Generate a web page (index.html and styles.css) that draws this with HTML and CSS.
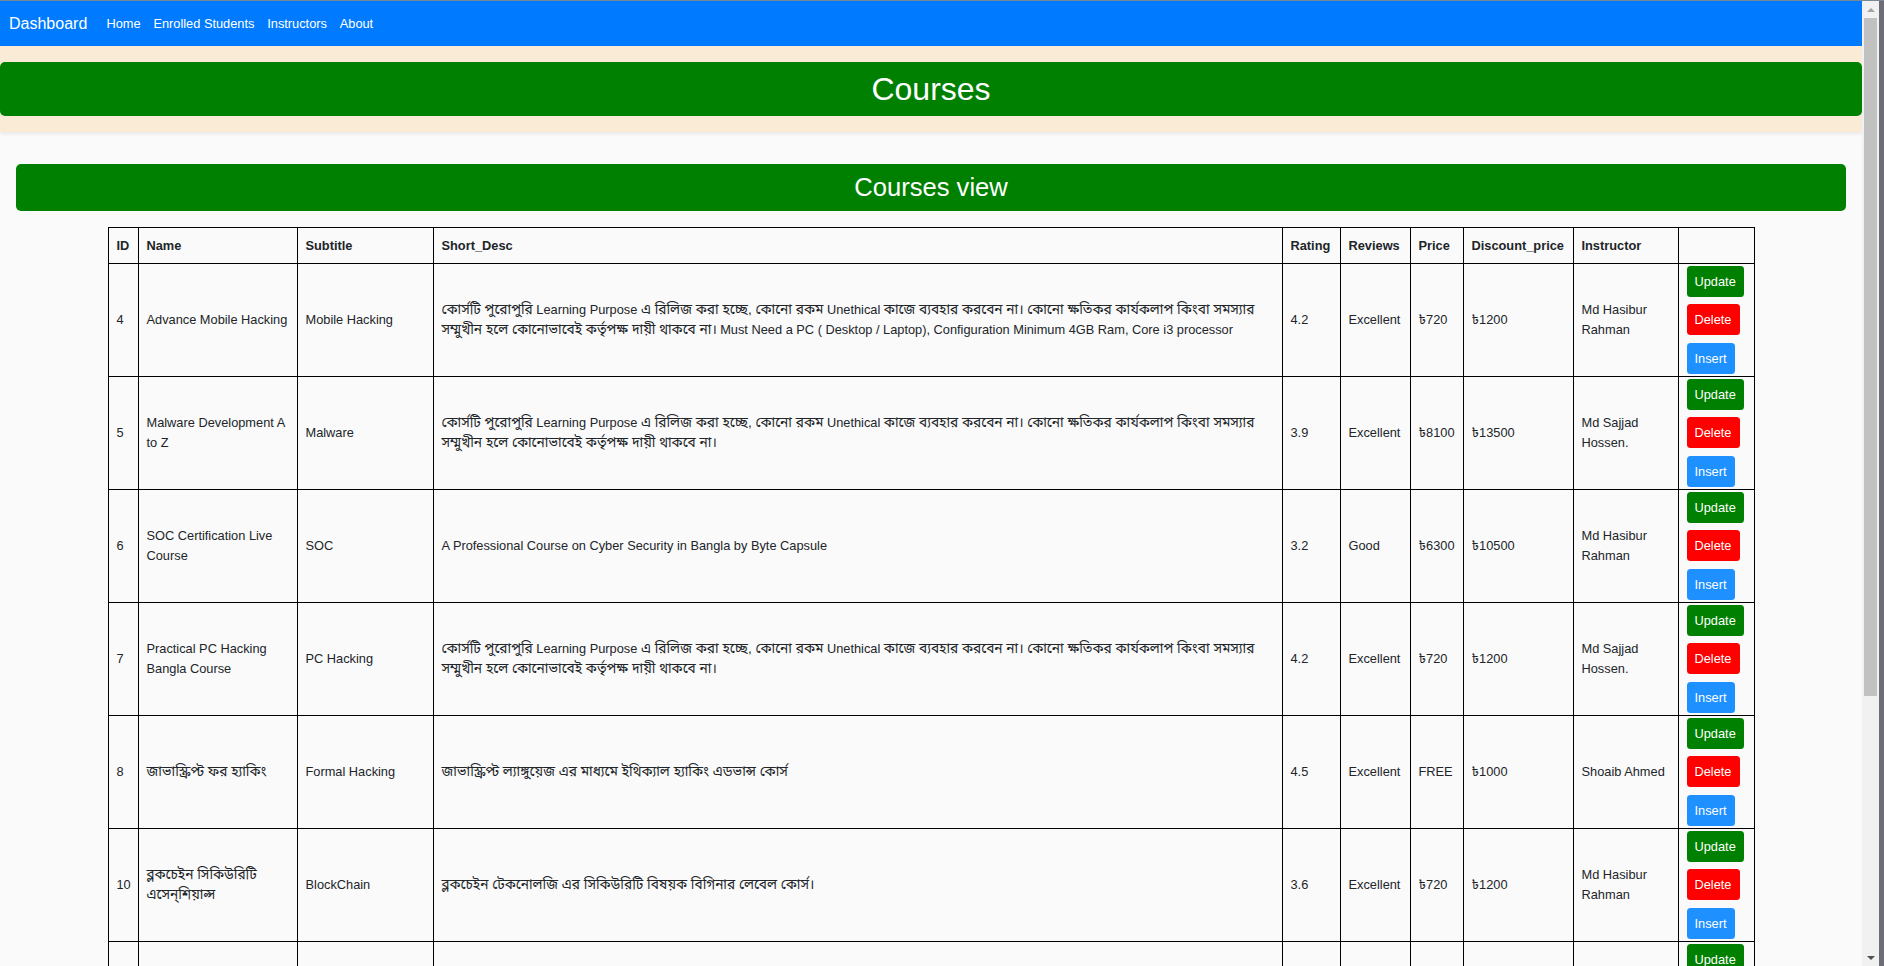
FILE: index.html
```html
<!DOCTYPE html>
<html lang="en">
<head>
<meta charset="utf-8">
<title>Dashboard - Courses</title>
<link rel="stylesheet" href="styles.css">
</head>
<body>
<div class="window">
  <div class="viewport">
    <nav class="navbar">
      <a class="brand" href="#">Dashboard</a>
      <a class="nav-link" href="#">Home</a>
      <a class="nav-link" href="#">Enrolled Students</a>
      <a class="nav-link" href="#">Instructors</a>
      <a class="nav-link" href="#">About</a>
    </nav>
    <header class="hero">
      <h1 class="hero-title">Courses</h1>
    </header>
    <main class="content">
      <h2 class="section-title">Courses view</h2>
      <table class="courses">
        <colgroup>
          <col class="c-id"><col class="c-name"><col class="c-sub"><col class="c-desc"><col class="c-rating"><col class="c-rev"><col class="c-price"><col class="c-disc"><col class="c-inst"><col class="c-act">
        </colgroup>
        <thead>
          <tr>
            <th>ID</th><th>Name</th><th>Subtitle</th><th>Short_Desc</th><th>Rating</th><th>Reviews</th><th>Price</th><th>Discount_price</th><th>Instructor</th><th></th>
          </tr>
        </thead>
        <tbody>
          <tr>
            <td>4</td>
            <td>Advance Mobile Hacking</td>
            <td>Mobile Hacking</td>
            <td><span class="bn" lang="bn">কোর্সটি পুরোপুরি</span> Learning Purpose <span class="bn" lang="bn">এ রিলিজ করা হচ্ছে, কোনো রকম</span> Unethical <span class="bn" lang="bn">কাজে ব্যবহার করবেন না। কোনো ক্ষতিকর কার্যকলাপ কিংবা সমস্যার সম্মুখীন হলে কোনোভাবেই কর্তৃপক্ষ দায়ী থাকবে না।</span> Must Need a PC ( Desktop / Laptop), Configuration Minimum 4GB Ram, Core i3 processor</td>
            <td>4.2</td><td>Excellent</td><td>৳720</td><td>৳1200</td><td>Md Hasibur Rahman</td>
            <td class="actions"><button class="btn btn-update">Update</button><button class="btn btn-delete">Delete</button><button class="btn btn-insert">Insert</button></td>
          </tr>
          <tr>
            <td>5</td>
            <td>Malware Development A to Z</td>
            <td>Malware</td>
            <td><span class="bn" lang="bn">কোর্সটি পুরোপুরি</span> Learning Purpose <span class="bn" lang="bn">এ রিলিজ করা হচ্ছে, কোনো রকম</span> Unethical <span class="bn" lang="bn">কাজে ব্যবহার করবেন না। কোনো ক্ষতিকর কার্যকলাপ কিংবা সমস্যার সম্মুখীন হলে কোনোভাবেই কর্তৃপক্ষ দায়ী থাকবে না।</span></td>
            <td>3.9</td><td>Excellent</td><td>৳8100</td><td>৳13500</td><td>Md Sajjad Hossen.</td>
            <td class="actions"><button class="btn btn-update">Update</button><button class="btn btn-delete">Delete</button><button class="btn btn-insert">Insert</button></td>
          </tr>
          <tr>
            <td>6</td>
            <td>SOC Certification Live Course</td>
            <td>SOC</td>
            <td>A Professional Course on Cyber Security in Bangla by Byte Capsule</td>
            <td>3.2</td><td>Good</td><td>৳6300</td><td>৳10500</td><td>Md Hasibur Rahman</td>
            <td class="actions"><button class="btn btn-update">Update</button><button class="btn btn-delete">Delete</button><button class="btn btn-insert">Insert</button></td>
          </tr>
          <tr>
            <td>7</td>
            <td>Practical PC Hacking Bangla Course</td>
            <td>PC Hacking</td>
            <td><span class="bn" lang="bn">কোর্সটি পুরোপুরি</span> Learning Purpose <span class="bn" lang="bn">এ রিলিজ করা হচ্ছে, কোনো রকম</span> Unethical <span class="bn" lang="bn">কাজে ব্যবহার করবেন না। কোনো ক্ষতিকর কার্যকলাপ কিংবা সমস্যার সম্মুখীন হলে কোনোভাবেই কর্তৃপক্ষ দায়ী থাকবে না।</span></td>
            <td>4.2</td><td>Excellent</td><td>৳720</td><td>৳1200</td><td>Md Sajjad Hossen.</td>
            <td class="actions"><button class="btn btn-update">Update</button><button class="btn btn-delete">Delete</button><button class="btn btn-insert">Insert</button></td>
          </tr>
          <tr>
            <td>8</td>
            <td><span class="bn" lang="bn">জাভাস্ক্রিপ্ট ফর হ্যাকিং</span></td>
            <td>Formal Hacking</td>
            <td><span class="bn" lang="bn">জাভাস্ক্রিপ্ট ল্যাঙ্গুয়েজ এর মাধ্যমে ইথিক্যাল হ্যাকিং এডভান্স কোর্স</span></td>
            <td>4.5</td><td>Excellent</td><td>FREE</td><td>৳1000</td><td>Shoaib Ahmed</td>
            <td class="actions"><button class="btn btn-update">Update</button><button class="btn btn-delete">Delete</button><button class="btn btn-insert">Insert</button></td>
          </tr>
          <tr>
            <td>10</td>
            <td><span class="bn" lang="bn">ব্লকচেইন সিকিউরিটি এসেন্শিয়াল্স</span></td>
            <td>BlockChain</td>
            <td><span class="bn" lang="bn">ব্লকচেইন টেকনোলজি এর সিকিউরিটি বিষয়ক বিগিনার লেবেল কোর্স।</span></td>
            <td>3.6</td><td>Excellent</td><td>৳720</td><td>৳1200</td><td>Md Hasibur Rahman</td>
            <td class="actions"><button class="btn btn-update">Update</button><button class="btn btn-delete">Delete</button><button class="btn btn-insert">Insert</button></td>
          </tr>
          <tr class="row-clipped">
            <td></td><td></td><td></td><td></td><td></td><td></td><td></td><td></td><td></td>
            <td class="actions"><button class="btn btn-update">Update</button><button class="btn btn-delete">Delete</button><button class="btn btn-insert">Insert</button></td>
          </tr>
        </tbody>
      </table>
    </main>
  </div>
  <div class="scrollbar">
    <span class="sb-arrow sb-up"></span>
    <span class="sb-thumb"></span>
    <span class="sb-spacer"></span>
    <span class="sb-arrow sb-down"></span>
  </div>
  <div class="edge"></div>
</div>
</body>
</html>
```

FILE: styles.css
```css
html, body {
  margin: 0;
  height: 100%;
  overflow: hidden;
}

body {
  font-family: "Liberation Sans", Arial, "Noto Sans Bengali", "Lohit Bengali", "FreeSans", sans-serif;
  color: #212529;
  background: #fafafa;
}

.window {
  display: flex;
  height: 966px;
  border-top: 1px solid #7b8794;
  box-sizing: border-box;
}

.viewport {
  flex: 0 0 1862px;
  overflow: hidden;
  background: #fafafa;
}

/* navbar */
.navbar {
  height: 45px;
  background: #007bff;
  display: flex;
  align-items: center;
  padding-left: 9px;
}

.brand {
  color: #fff;
  text-decoration: none;
  font-size: 16px;
  margin-right: 12.8px;
}

.nav-link {
  color: #fff;
  text-decoration: none;
  font-size: 12.8px;
  padding: 0 6.4px;
}

/* hero */
.hero {
  background: #faebd7;
  padding: 16px 0;
  box-shadow: 0 2px 4px rgba(0, 0, 0, 0.08);
  position: relative;
}

.hero-title {
  margin: 0;
  height: 54px;
  line-height: 54px;
  background: #008000;
  border-radius: 5px;
  color: #fff;
  font-size: 32px;
  font-weight: normal;
  text-align: center;
}

/* content */
.content {
  padding: 32px 16px 0 16px;
}

.section-title {
  margin: 0 0 16px;
  height: 47px;
  line-height: 47px;
  background: #008000;
  border-radius: 5px;
  color: #fff;
  font-size: 25.6px;
  font-weight: normal;
  text-align: center;
}

.courses {
  margin: 0 auto;
  width: 1646px;
  border-collapse: collapse;
  table-layout: fixed;
}

.c-id { width: 30px; }
.c-name { width: 159px; }
.c-sub { width: 136px; }
.c-desc { width: 849px; }
.c-rating { width: 58px; }
.c-rev { width: 70px; }
.c-price { width: 53px; }
.c-disc { width: 110px; }
.c-inst { width: 105px; }
.c-act { width: 76px; }

.courses th,
.courses td {
  border: 1px solid #000;
  text-align: left;
  vertical-align: middle;
}

.courses th {
  padding: 8px 8px;
  font-size: 12.8px;
  line-height: 19px;
  font-weight: bold;
}

.courses td {
  padding: 2px 8px;
  font-size: 12.8px;
  line-height: 20px;
}

.bn {
  font-size: 13.7px;
  line-height: 20px;
}

.btn {
  display: block;
  width: fit-content;
  height: 31px;
  line-height: 31px;
  padding: 0 8px;
  border: none;
  border-radius: 3.5px;
  color: #fff;
  font-family: "Liberation Sans", Arial, sans-serif;
  font-size: 12.8px;
}

.btn-update { background: #008000; }
.btn-delete { background: #ff0000; margin-top: 7px; }
.btn-insert { background: #1e90ff; margin-top: 8px; }

/* scrollbar */
.scrollbar {
  flex: 0 0 17px;
  background: #f1f1f1;
  display: flex;
  flex-direction: column;
  align-items: center;
}

.sb-arrow {
  flex: 0 0 17px;
  width: 17px;
  display: flex;
  align-items: center;
  justify-content: center;
}

.sb-up::before,
.sb-down::before {
  content: "";
  width: 0;
  height: 0;
  border-left: 4px solid transparent;
  border-right: 4px solid transparent;
}

.sb-up::before { border-bottom: 4px solid #a3a3a3; }
.sb-down::before { border-top: 4px solid #505050; }

.sb-thumb {
  width: 13px;
  height: 678px;
  background: #c1c1c1;
}

.sb-spacer { flex: 1; }

.edge {
  flex: 0 0 5px;
  background: #6d6d79;
}
```
